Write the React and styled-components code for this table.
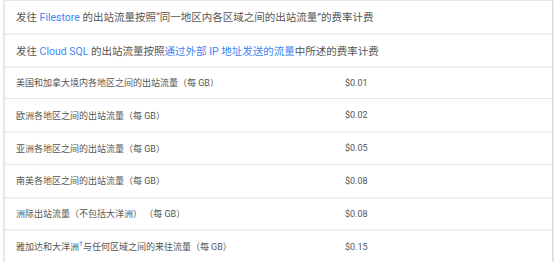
import React from 'react';
import styled, { createGlobalStyle } from 'styled-components';

const GlobalStyle = createGlobalStyle`
    html, body {
        margin: 0;
        padding: 0;
        background: #fff;
    }
    body {
        font-family: Roboto, "Noto Sans CJK SC", sans-serif;
    }
`;

const Card = styled.div`
    box-sizing: border-box;
    margin-left: 4px;
    width: 549px;
    border-left: 1px solid #e4e4e4;
    border-right: 1px solid #dcdcdc;
    box-shadow: 0 1px 2px rgba(0,0,0,0.25);
    background: #fff;
`;

const Row = styled.div`
    display: grid;
    grid-template-columns: ${props => props.full ? '1fr' : '326px 1fr'};
    align-items: center;
    height: ${props => props.thick ? 30.75 : 31.75}px;
    border-top: ${props => props.thick ? '2px solid #f0f0f0' : '1px solid #e6e6e6'};
    font-size: ${props => props.full ? 10.5 : 9}px;
    color: #555;
`;

const Cell = styled.div`
    padding-left: ${props => props.price ? 14 : 11}px;
    white-space: nowrap;
`;

const Link = styled.span`
    color: #4285f4;
`;

const Note = styled.sup`
    color: #4285f4;
    font-size: 7px;
    line-height: 0;
`;

const rows = [
    { label: '美国和加拿大境内各地区之间的出站流量（每 GB）', price: '$0.01', thick: true },
    { label: '欧洲各地区之间的出站流量（每 GB）', price: '$0.02' },
    { label: '亚洲各地区之间的出站流量（每 GB）', price: '$0.05', thick: true },
    { label: '南美各地区之间的出站流量（每 GB）', price: '$0.08' },
    { label: '洲际出站流量（不包括大洋洲） （每 GB）', price: '$0.08', thick: true },
];

export default function App() {
    return (
        <>
            <GlobalStyle />
            <Card>
                <Row full>
                    <Cell>发往 <Link>Filestore</Link> 的出站流量按照“同一地区内各区域之间的出站流量”的费率计费</Cell>
                </Row>
                <Row full thick>
                    <Cell>发往 <Link>Cloud SQL</Link> 的出站流量按照<Link>通过外部 IP 地址发送的流量</Link>中所述的费率计费</Cell>
                </Row>
                {rows.map((r, i) => (
                    <Row key={i} thick={r.thick}>
                        <Cell>{r.label}</Cell>
                        <Cell price>{r.price}</Cell>
                    </Row>
                ))}
                <Row thick>
                    <Cell>雅加达和大洋洲<Note>†</Note>与任何区域之间的来往流量（每 GB）</Cell>
                    <Cell price>$0.15</Cell>
                </Row>
            </Card>
        </>
    );
}
